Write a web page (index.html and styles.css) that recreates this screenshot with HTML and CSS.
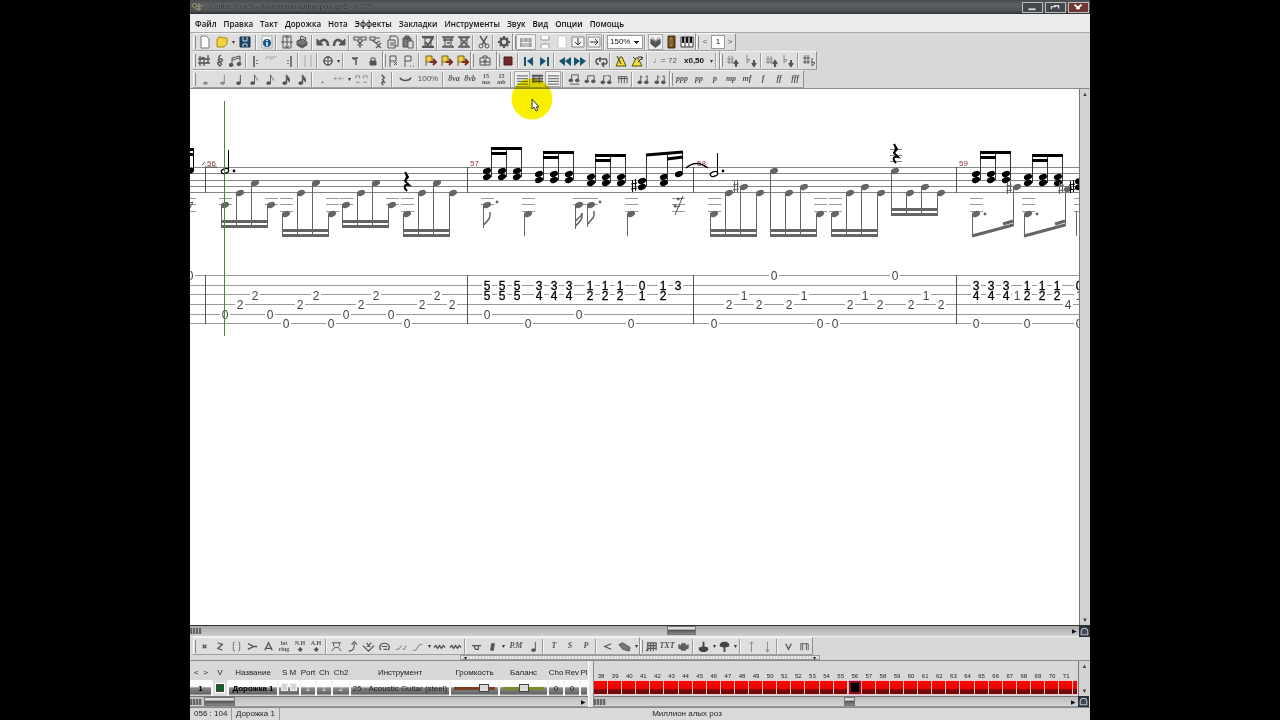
FILE: index.html
```html
<!DOCTYPE html>
<html lang="ru">
<head>
<meta charset="utf-8">
<title>Guitar Pro 5</title>
<link rel="stylesheet" href="styles.css">
</head>
<body>
<div class="window">
  <header class="titlebar">
    <svg class="app-icon" viewBox="0 0 12 12"><path d="M1 3h3v3H1zM5 5h6M3 8h6M7 2v8" stroke="#a59c70" fill="#222"/></svg>
    <span class="title">Guitar Pro 5 - [Миллион алых роз.gp5 - t=72]</span>
    <button class="win-btn" aria-label="Свернуть"><svg viewBox="0 0 20 10"><path d="M6 7h8" stroke="#ddd" stroke-width="2"/></svg></button>
    <button class="win-btn" aria-label="Развернуть"><svg viewBox="0 0 20 10"><path d="M6 7V4h5M9 3h5v3" stroke="#ddd" stroke-width="1.5" fill="none"/></svg></button>
    <button class="win-btn close" aria-label="Закрыть"><svg viewBox="0 0 20 10"><path d="M6 2l4 3 4-3M8 6h4" stroke="#fff" stroke-width="2" fill="none"/></svg></button>
  </header>
  <nav class="menu">
    <button>Файл</button><button>Правка</button><button>Такт</button><button>Дорожка</button><button>Нота</button><button>Эффекты</button><button>Закладки</button><button>Инструменты</button><button>Звук</button><button>Вид</button><button>Опции</button><button>Помощь</button>
  </nav>
  <div class="toolbar" id="tb-main"></div>
  <div class="toolbar" id="tb-play"></div>
  <div class="toolbar" id="tb-notes"></div>
  <main class="score">
    <div class="sheet"><svg id="sheet" width="889" height="536" viewBox="190 89 889 536"></svg></div>
    <div class="vscroll"><span class="arrow">▲</span><span class="arrow">▼</span></div>
  </main>
  <div class="hrow">
    <div class="hscroll dark"><span class="badge"></span><span class="thumb sheet-thumb"></span><span class="arrow">▶</span></div>
    <button class="corner" aria-label="Обзор"><svg viewBox="0 0 10 10"><path d="M2 8V5a3 3 0 016 0v3z" stroke="#b9c4ce" fill="#445"/></svg></button>
  </div>
  <div class="toolbar fx" id="tb-fx"></div>
  <div class="divider"><div class="divider-bar"><span>▾</span><span>▾</span></div></div>
  <section class="bottom">
    <div class="tracks">
      <table>
        <colgroup><col class="c22"><col class="c16"><col class="c50"><col class="c22"><col class="c16"><col class="c16"><col class="c18"><col class="c100"><col class="c49"><col class="c49"><col class="c16"><col class="c16"><col class="c8"></colgroup>
        <thead><tr><th>&lt;&nbsp; &gt;</th><th>V</th><th>Название</th><th>S M</th><th>Port</th><th>Ch</th><th>Ch2</th><th>Инструмент</th><th>Громкость</th><th>Баланс</th><th>Cho</th><th>Rev</th><th>Pl</th></tr></thead>
        <tbody><tr><td class="b">1</td><td><input type="checkbox" checked aria-label="V"></td><td class="b">Дорожка 1</td><td><span class="sm"></span><span class="sm"></span></td><td class="w">1</td><td class="w">1</td><td class="w">2</td><td>25 - Acoustic Guitar (steel)</td>
        <td><input class="vol" type="range" min="0" max="16" value="13" aria-label="Громкость"></td><td><input class="pan" type="range" min="-8" max="8" value="0" aria-label="Баланс"></td><td>0</td><td>0</td><td></td></tr></tbody>
      </table>
      <div class="hscroll"><span class="badge"></span><span class="thumb track-thumb"></span><span class="arrow">▶</span></div>
    </div>
    <div class="split"></div>
    <div class="bars">
      <div class="bar-list" id="bars"></div>
      <div class="hscroll"><span class="badge"></span><span class="thumb bar-thumb"></span><span class="arrow">▶</span></div>
    </div>
    <div class="side">
      <div class="vscroll"><span class="arrow">▲</span><span class="arrow">▼</span></div>
      <button class="corner" aria-label="Обзор тактов"><svg viewBox="0 0 10 10"><path d="M2 8V5a3 3 0 016 0v3z" stroke="#b9c4ce" fill="#445"/></svg></button>
    </div>
  </section>
  <footer class="status"><span class="pos">056 : 104</span><span class="name">Дорожка 1</span><span class="song">Миллион алых роз</span></footer>
  <svg class="pointer" viewBox="0 0 42 42"><circle cx="21" cy="21" r="20.500" fill="#f8f000"/></svg>
  <svg class="arrow-cursor" viewBox="0 0 9 14"><path d="M1 1v10l2-2 2 4 2-1-2-3h3z" fill="#fff" stroke="#333"/></svg>
</div>
<script src="app.js"></script>
</body>
</html>
```
FILE: styles.css
```css
* { box-sizing: border-box; }
body { margin: 0; padding: 0 190px; background: #000; font: 8px/10px "Liberation Sans", Arial, sans-serif; color: #222; }
button, input, select { font: inherit; color: inherit; margin: 0; padding: 0; }
button { border: 0; background: none; }
svg { display: block; }
.window { position: relative; min-height: 100vh; display: flex; flex-direction: column; background: #d8d8d8; overflow: hidden; }
.titlebar { height: 14px; display: flex; align-items: center; gap: 2px; padding: 0 1px 0 2px; background: linear-gradient(#484a4c 0, #5a5e61 30%, #505457 75%, #303234); }
.app-icon { width: 12px; height: 12px; }
.title { flex: 1; padding-left: 4px; font-size: 8px; color: #222426; text-shadow: 0 0 1px #aaa; white-space: nowrap; }
.win-btn { width: 21px; height: 11px; border: 1px solid #b9bcbe; background: #45494c; }
.win-btn svg { width: 18px; height: 9px; }
.close { background: #713630; }
.menu { height: 19px; display: flex; align-items: center; gap: 7px; padding: 2px 5px 0; background: #ececec; border-bottom: 1px solid #a8a8a8; font: 600 8px/12px "Open Sans", sans-serif; color: #111; }
.menu button { white-space: nowrap; }

.toolbar { height: 18px; display: flex; align-items: stretch; padding-left: 3px; background: #d8d8d8; }
.toolbar + .score { border-top: 1px solid #8b8b8b; }
#tb-play { height: 19px; }
.set { display: flex; align-items: center; background: #dedede; border-right: 1px solid #8f8f8f; border-bottom: 1px solid #a0a0a0; border-top: 1px solid #f4f4f4; }
.grip { width: 3px; height: 13px; border-left: 1px solid #fff; border-right: 1px solid #8a8a8a; }
.sep { width: 2px; height: 15px; margin: 0 2px 0 1px; border-left: 1px solid #999; border-right: 1px solid #f6f6f6; }
.tool { height: 16px; flex: none; display: flex; align-items: center; justify-content: center; color: #555; white-space: nowrap; }
.tool svg { width: 14px; height: 14px; fill: none; stroke: currentColor; }
#tb-notes .tool svg, #tb-fx .tool svg { width: 13px; height: 13px; }
.tool.wide { font-size: 8px; }
.tool.word { font: italic bold 8px/8px "Liberation Serif", serif; }
.tool.tiny { font: bold 6px/6px "Liberation Serif", serif; white-space: normal; }
.tool.on { background: #f0f0f0; border: 1px solid #aaa; }
.tool.strong { font-weight: bold; color: #111; }
.drop { width: 6px; flex: none; font-size: 6px; color: #333; text-align: center; }
.zoom { width: 36px; height: 14px; appearance: none; border: 1px solid #999; border-radius: 0; background: #fff; padding: 0 2px; background: linear-gradient(#222, #222) 26px 5px / 5px 1px no-repeat, linear-gradient(#222, #222) 27px 6px / 3px 1px no-repeat, linear-gradient(#222, #222) 28px 7px / 1px 1px no-repeat, #fff; }
.page { width: 14px; height: 14px; border: 1px solid #999; background: #fff; text-align: center; line-height: 12px; }

.score { flex: 1; min-height: 0; display: flex; background: #fff; }
.sheet { flex: 1; min-width: 0; overflow: hidden; height: 536px; }
.vscroll { width: 11px; display: flex; flex-direction: column; justify-content: space-between; align-items: center; background: #d2d2d2; border-left: 1px solid #777; }
.arrow { font-size: 6px; line-height: 10px; color: #444; }
.hrow { display: flex; height: 12px; border-top: 1px solid #333; border-bottom: 1px solid #eee; }
.hscroll { position: relative; flex: 1; height: 11px; display: flex; align-items: center; background: linear-gradient(#bcbcbc, #d4d4d4); border-top: 1px solid #777; border-bottom: 1px solid #999; }
.hscroll.dark { background: linear-gradient(#a8a8a8, #cfcfcf); height: 10px; border: 0; }
.hscroll .arrow { margin-left: auto; padding-right: 2px; color: #111; }
.badge { width: 12px; height: 6px; background: repeating-linear-gradient(90deg, #666 0 2px, #aaa 2px 3px); }
.thumb { position: absolute; top: 0; height: 9px; background: linear-gradient(#ddd 0 30%, #555 45%, #888); border: 1px solid #777; }
.sheet-thumb { left: 53.6%; width: 29px; }
.track-thumb { left: 14px; width: 31px; }
.bar-thumb { left: 51.6%; width: 11px; }
.corner { width: 11px; height: 11px; background: #27323c; }

.divider { height: 6px; padding: 0 30% 0 30%; background: #d8d8d8; border-bottom: 1px solid #888; }
.divider-bar { height: 5px; display: flex; justify-content: space-between; border: 1px solid #999; background: repeating-linear-gradient(90deg, #e6e6e6 0 2px, #ccc 2px 3px); font-size: 6px; line-height: 4px; padding: 0 3px; }
.bottom { display: flex; height: 46px; }
.tracks { flex: 0 0 398px; overflow: hidden; }
table { table-layout: fixed; width: 398px; border-collapse: collapse; }
.c8 { width: 8px; } .c16 { width: 16px; } .c18 { width: 18px; } .c22 { width: 22px; } .c49 { width: 49px; } .c50 { width: 50px; } .c100 { width: 100px; }
th { height: 19px; padding: 5px 0 0; font-weight: normal; white-space: nowrap; overflow: visible; }
th:last-child { overflow: hidden; }
td { height: 16px; padding: 0; text-align: center; white-space: nowrap; overflow: hidden; border-right: 2px solid #f4f4f4; background: linear-gradient(#fff 0 40%, #888 50%, #666 85%, #eee); line-height: 9px; }
td.b { font-weight: bold; color: #000; }
td.w { color: #eee; }
td:nth-child(2) { background: #ddd; }
input[type=checkbox] { appearance: none; display: block; width: 8px; height: 8px; margin: 0 auto; border: 1px solid #444; background: #125c20; outline: 1px solid #fff; }
.sm { display: inline-block; width: 7px; height: 8px; margin: 0 1px; background: #d5d5d5; border: 1px solid #eee; }
input[type=range] { appearance: none; display: block; width: 41px; height: 9px; margin: 0 auto; }
.vol { background: linear-gradient(#7d3d22, #7d3d22) no-repeat center / 100% 3px; }
.pan { background: linear-gradient(#7c8a28, #7c8a28) no-repeat center / 100% 3px; }
input[type=range]::-webkit-slider-thumb { appearance: none; width: 10px; height: 8px; background: #ddd; border: 1px solid #444; }
.split { width: 6px; background: #e4e4e4; border-left: 1px solid #fff; border-right: 1px solid #888; }
.bars { flex: 1; min-width: 0; overflow: hidden; }
.bar-list { height: 35px; display: flex; padding-top: 11px; overflow: hidden; }
.bar { min-width: 0; overflow: hidden; text-align: center; font-size: 6px; line-height: 8px; }
.cell { height: 15px; border: solid #f3c9c9; border-width: 1px 1px 1px 0; background: linear-gradient(#f40303 0 58%, #740a0a 68%); }
.cell.current { background: #000; border: 3px solid #8b1111; outline: 1px solid #eac; outline-offset: -1px; }
.side { width: 12px; display: flex; flex-direction: column; }
.side .vscroll { flex: 1; width: 12px; }
.status { height: 13px; display: flex; align-items: center; border-top: 1px solid #888; background: #d9d9d9; }
.status span { line-height: 12px; padding: 0 4px; white-space: nowrap; }
.pos { width: 42px; border-right: 1px solid #999; }
.name { width: 48px; border-right: 1px solid #999; }
.status .song { flex: 1; text-align: center; padding-right: 0; }
.pointer { position: absolute; left: 321px; top: 78px; width: 42px; height: 42px; mix-blend-mode: multiply; }
.arrow-cursor { position: absolute; left: 341px; top: 98px; width: 9px; height: 14px; }
.digit { font: 12px/10px "Liberation Sans Narrow", "Liberation Sans", sans-serif; text-anchor: middle; }
.barno { font: 8px/8px "Liberation Sans", sans-serif; fill: #96303a; }
```
FILE: app.js
```js
/* ---------- toolbar icons, drawn on a 14 x 14 grid ---------- */
const head = (x, y) => `<ellipse cx="${x}" cy="${y}" rx="2" ry="1.500" fill="currentColor"/>`;
const arrowR = '<path d="M7 8h6M10 5l3 3-3 3" stroke="#7c2d1d" stroke-width="2"/>';
const flagY = '<path d="M3 12V2h6v6H3" fill="#f0cf45" stroke="#76651b"/>';
const chart = '<path d="M2 3h10M2 11h10M4 3v8M10 3v8"/>';
const icons = {
  new: '<path d="M3 1h5l3 3v9H3z" fill="#fff" stroke="#777"/>',
  open: '<path d="M2 4l2-2h3l1 1h4v6l-3 3H2z" fill="#f2d33e" stroke="#a48a18"/>',
  save: '<path d="M2 2h10v10H2z" fill="#1d4468" stroke="#16334c"/><path d="M5 2v4h4V2M5 12V9h4v3" stroke="#c7d6e2"/>',
  info: '<path d="M2 1h10v12H2z" fill="#f4f4f4" stroke="#aaa"/><circle cx="7" cy="8" r="4" fill="#145b8c" stroke="none"/><path d="M7 5v1M7 7v4" stroke="#fff" stroke-width="1.500"/>',
  page: '<path d="M3 1h8v12H3zM7 1v12M1 7h12M5 3l2-2 2 2M5 11l2 2 2-2"/>',
  print: '<path d="M2 6l6-2 4 3v3l-5 3-5-3z" fill="#777"/><path d="M5 5l1-4 5 2-1 3M3 9l4 2 4-2" stroke="#444"/>',
  undo: '<path d="M12 11c0-6-4-8-8-4" stroke-width="2.500"/><path d="M1 4v6h6z" fill="currentColor"/>',
  redo: '<path d="M2 11c0-6 4-8 8-4" stroke-width="2.500"/><path d="M13 4v6H7z" fill="currentColor"/>',
  plusnote: '<path d="M1 2h5v3H1zM8 2h5v3H8zM4 5l3 4 3-4M7 7v6M4 10h6" stroke-width="1.200"/>',
  minusnote: '<path d="M1 2h5v3H1zM7 3h4M3 5l4 3 4-2M7 8l5 5M12 8l-5 5" stroke-width="1.200"/>',
  copy: '<path d="M3 5h7v8H3zM5 5V1h6l2 2v8h-3" /><path d="M5 8h4M5 10h4"/>',
  paste: '<path d="M2 3h8v9H2zM4 1h4v3H4z" fill="#777"/><path d="M7 6h5v7H7z" fill="#ddd"/>',
  check: chart + '<path d="M1 2h12M1 12h12M4 7l3 3 5-7" stroke-width="2"/>',
  table: chart + '<path d="M1 2h12M1 12h12M2 5h10M6 8h3" stroke-width="1.500"/>',
  tablex: chart + '<path d="M1 2h12M1 12h12M4 4l6 6M10 4l-6 6" stroke-width="1.500"/>',
  cut: '<path d="M3 1l6 9M10 1L5 10" stroke-width="1.500"/><circle cx="4" cy="11" r="2"/><circle cx="10" cy="11" r="2"/>',
  gear: '<circle cx="7" cy="7" r="3.500" stroke-width="2.500"/><path d="M7 1v3M7 10v3M1 7h3M10 7h3M3 3l2 2M9 9l2 2M11 3L9 5M5 9l-2 2" stroke-width="2"/>',
  screen: '<path d="M1 4h12M1 6h12M1 9h12M1 11h12M2 3v9M7 3v4M11 3v9" stroke="#888"/>',
  hpage: '<path d="M3 1v4h8V1M3 13V9h8v4" fill="#fff" stroke="#999"/>',
  blank: '<path d="M3 1h8v12H3z" fill="#fff" stroke="#ccc"/>',
  down: '<path d="M1 2h12v10H1z" fill="#f2f2f2" stroke="#888"/><path d="M7 3v7M4 7l3 3 3-3" stroke="#333"/>',
  right: '<path d="M1 2h12v10H1z" fill="#f2f2f2" stroke="#888"/><path d="M3 7h8M8 4l3 3-3 3" stroke="#333"/>',
  basket: '<path d="M2 4l5 3 5-3v5l-5 4-5-4z" fill="#555"/><path d="M3 2l4 4 4-4"/>',
  door: '<path d="M4 1h7v12H4z" fill="#65471f" stroke="#4a3211"/><path d="M6 3h2v8H6z" stroke="#b08a4a"/>',
  piano: '<path d="M1 2h12v10H1zM5 2v10M9 2v10" fill="#fff" stroke="#333"/><path d="M3 2v6M7 2v6M11 2v6" stroke="#111" stroke-width="2"/>',
  clef: '<path d="M1 5h12M1 9h12M3 2v10M7 3v9M11 1v8M3 6l3-3" stroke-width="1.300"/>',
  clefS: '<path d="M8 1c-3 2-3 3 0 4s1 3-2 3 0 4 2 4M5 5l4 6" stroke-width="1.500"/>',
  pair: '<path d="M3 11V4l8-2v7M3 6l8-2"/>' + head(2, 11) + head(10, 10),
  repL: '<path d="M4 2v11M7 6v1M7 9v1" stroke-width="1.500"/>',
  alt: '<path d="M1 5V3h11M4 5h4" stroke="#aaa"/>',
  repR: '<path d="M10 2v11M7 6v1M7 9v1" stroke-width="1.500"/>',
  bar: '<path d="M4 1v12M10 1v12" stroke="#aaa"/>',
  diamond: '<circle cx="7" cy="7" r="4" stroke-width="1.500"/><path d="M7 2v10M2 7h10"/>',
  para: '<path d="M4 4h6M8 4v7M5 5h2" stroke-width="1.500"/>',
  lock: '<path d="M4 7h6v4H4z" fill="#555"/><path d="M5 7V4h4v3"/>',
  flag: '<path d="M3 13V2h6v5H3M7 8l3 3M10 8l-3 3"/>',
  flags: '<path d="M3 13V2h6v5H3M8 12h1M11 12h1"/>',
  flagY: flagY + arrowR,
  box: '<path d="M2 4h10v7H2zM5 4V2h4v2M5 7h4M7 5v7M2 8h10"/>',
  stop: '<path d="M3 3h8v8H3z" fill="#702a2a" stroke="#501818"/>',
  first: '<path d="M3 3v9" stroke="#14536e" stroke-width="2"/><path d="M11 3v9L5 7z" fill="#14536e" stroke="none"/>',
  last: '<path d="M11 3v9" stroke="#14536e" stroke-width="2"/><path d="M3 3v9l6-5z" fill="#14536e" stroke="none"/>',
  rew: '<path d="M7 3v9L1 7zM13 3v9L7 7z" fill="#14536e" stroke="none"/>',
  fwd: '<path d="M7 3v9l6-5zM1 3v9l6-5z" fill="#14536e" stroke="none"/>',
  loop: '<path d="M5 10H3q-2-3 0-5h9q2 3 0 5H8M10 8l-2 2 2 3M6 3v5" stroke-width="1.500"/>',
  metro: '<path d="M2 12h10L8 3H6z" fill="#efdc3b" stroke="#554d12"/><path d="M7 10L3 2" stroke="#333"/>',
  metro2: '<path d="M2 12h10L8 4H6z" fill="#efdc3b" stroke="#554d12"/><path d="M3 3l3 3M8 3h4v3M8 8l5-5" stroke="#333"/>',
  sharpU: '<path d="M3 2v8M6 2v8M1 5h7M1 8h7" stroke="#888"/><path d="M10 13V8M8 10l2-3 2 3" stroke-width="2"/>',
  flatD: '<path d="M3 1v8l3-3-3-1" stroke="#888"/><path d="M10 6v6M8 9l2 3 2-3" stroke-width="2"/>',
  sharp: '<path d="M3 1v9M6 1v9M1 4h7M1 8h7M10 4v8l3-3-3-1"/>',
  whole: '<ellipse cx="7" cy="11" rx="2" ry="1"/>',
  half: '<path d="M9 2v9" stroke="#888"/><ellipse cx="7" cy="11" rx="2" ry="1"/>',
  quarter: '<path d="M9 2v9"/>' + head(7, 11),
  eighth: '<path d="M7 11V2c0 3 4 3 3 6"/>' + head(5, 11),
  sixteenth: '<path d="M7 11V2c0 3 4 3 3 6M7 5c0 2 4 2 3 5" stroke-width="1.500"/>' + head(5, 11),
  dot: '<circle cx="7" cy="10" r=".5" fill="currentColor"/>',
  triplet: '<path d="M1 6h3M6 6h3M11 6h2M4 4v4M9 4v4" stroke="#999"/>',
  triplet2: '<path d="M1 6V3h4v3M9 6V3h4v3M1 10h4M9 10h4" stroke="#888"/>',
  rest: '<path d="M6 2l3 3-2 2 2 3c-4-1-3 2-1 3" stroke-width="1.500"/>',
  tie: '<path d="M1 5c2 4 10 4 12 0" stroke-width="1.500"/>',
  lines: '<path d="M1 3h12M1 6h12M1 9h12M1 12h12" stroke="#777" stroke-width="1.300"/>',
  linesB: '<path d="M1 3h12M1 6h12M1 9h12" stroke-width="2"/><path d="M3 2v9M9 2v9"/>',
  beam: '<path d="M4 9V3h7v6"/>' + head(3, 9) + head(10, 9),
  beamI: '<path d="M4 10V3h3M8 3h3v7"/>' + head(3, 10) + head(10, 10),
  beamT: '<path d="M4 8V2h7v6M2 12h10"/>' + head(3, 8) + head(10, 8),
  four: '<path d="M2 4h10M3 4v7M6 4v7M9 4v7M12 4v7M2 6h10"/>',
  split: '<path d="M4 10V3l2 2M11 10V3l-2 1"/>' + head(3, 10) + head(10, 10),
  x: '<path d="M5 5l4 4M9 5l-4 4" stroke-width="1.500"/>',
  ghost: '<path d="M4 3l5 2-5 4 5 2M6 8l3-4" stroke-width="1.300"/>',
  braces: '<path d="M5 2c-3 1 0 4-2 5 2 1-1 4 2 5M9 2c3 1 0 4 2 5-2 1 1 4-2 5"/>',
  accent: '<path d="M2 4l6 3-6 3M8 7h4" stroke-width="1.500"/>',
  letA: '<path d="M3 11l4-8 4 8M4 9h6" stroke-width="1.500"/>',
  bend: '<path d="M3 12c5 0 6-3 6-8M6 5l3-3 3 3" stroke-width="1.300"/>',
  wham: '<path d="M2 3h10M4 3v4M10 3v4M2 12l3-4h4l3 4"/>',
  vee: '<path d="M1 6l6 6 6-6M5 3l2 3 3-3M5 7h4" stroke-width="1.300"/>',
  arch: '<path d="M3 11c-6-10 14-10 8 0M4 7h6M6 10h4" stroke-width="1.300"/>',
  slide: '<path d="M1 10h3l3-4M8 10h2l2-4" stroke="#777"/>',
  step: '<path d="M1 11h3l4-6h3" stroke="#777"/>',
  wave: '<path d="M1 8l2-2 2 3 2-3 2 3 2-3 2 2" stroke-width="1.500"/>',
  pick: '<path d="M4 6h5v4H6zM2 6h10" stroke-width="1.300"/>',
  block: '<path d="M6 4h3l-1 7H5z" fill="#555"/>',
  less: '<path d="M11 4L4 7l7 3" stroke-width="1.300"/>',
  stain: '<path d="M1 5l4-2 8 5-1 4-7-2z" fill="#777"/>',
  grid: '<path d="M2 3h10v8M2 6h10M2 9h10M3 3v9M6 3v9M9 3v9M12 3v7M1 12l3-3" stroke-width="1.300"/>',
  amp: '<path d="M2 5l3 2v3L2 9zM12 5L9 7v3l3-1zM5 4h4v7H5z" fill="#666"/>',
  hand: '<path d="M2 11V8l4-1V2h2v5l4 1v3l-3 2H5z" fill="#444" stroke="none"/>',
  handD: '<path d="M2 4v3l4 1v5h2V8l4-1V4L9 2H5z" fill="#444" stroke="none"/>',
  up: '<path d="M7 13V2M5 4l2-2 2 2" stroke="#888"/>',
  dn: '<path d="M7 2v11M5 10l2 3 2-3" stroke="#888"/>',
  pickV: '<path d="M4 4l3 6 3-6" stroke-width="1.500"/>',
  pickD: '<path d="M3 11V4h8v7M5 4v7M9 4v7"/>'
};

/* "icon:width" is a button, "'text:width" a text button, "|" a separator,
   "v" a drop-down arrow, "||" starts a new group, "+" marks a pressed button */
const bars = {
  'tb-main': 'new:18 open:16 v save:18 | info:15 | page:15 print:16 | undo:16 redo:16 | plusnote:16 minusnote:16 copy:16 paste:15 | check:15 | table:16 tablex:15 | cut:15 | gear:16 || +screen:20 hpage:18 blank:16 down:16 +right:16 | ZOOM | +basket:15 door:16 piano:16 || PREV PAGE NEXT',
  'tb-play': 'clef:16 clefS:16 pair:16 | repL:15 alt:16 repR:16 | bar:14 | diamond:15 v | para:18 lock:18 || flag:15 flags:16 | flagY:16 flagY:16 flagY:16 || box:22 || stop:16 | first:15 last:16 | rew:15 fwd:16 | loop:15 | metro:16 metro2:16 | \'♩=_72:30 #x0,50:28 v | || sharpU:20 flatD:16 | sharpU:16 flatD:16 | sharp:15',
  'tb-notes': 'whole:18 half:16 quarter:16 eighth:16 eighth:16 sixteenth:16 sixteenth:16 | dot:15 triplet:16 v triplet2:18 | rest:15 | tie:20 \'100%:26 | ~8va:16 ~8vb:16 ^15_ma:16 ^15_mb:15 | +lines:16 linesB:15 +lines:16 | beamT:16 beam:16 beamI:16 four:16 | split:16 split:18 || ~ppp:18 ~pp:16 ~p:16 ~mp:16 ~mf:16 ~f:16 ~ff:16 ~fff:16',
  'tb-fx': 'x:16 ghost:16 braces:16 accent:16 letA:16 ^let_ring:16 ^N.H_◆:16 ^A.H_◆:16 | wham:15 bend:16 vee:16 arch:16 slide:18 step:16 v wave:15 wave:16 | pick:16 block:16 v ~P.M:20 quarter:15 | ~T:16 ~S:16 ~P:16 | less:16 stain:18 v || grid:16 ~TXT:16 amp:16 | hand:15 v handD:15 v | up:16 dn:16 | pickV:16 pickD:16'
};
function tool(t) {
  if (t === '|') return '<span class="sep"></span>';
  if (t === '||') return '</div><div class="set"><span class="grip"></span>';
  if (t === 'v') return '<span class="drop">▾</span>';
  if (t === 'ZOOM') return '<select class="zoom" aria-label="Масштаб"><option>150%</option></select>';
  if (t === 'PREV') return '<button class="tool" style="width:12px">&lt;</button>';
  if (t === 'PAGE') return '<span class="page">1</span>';
  if (t === 'NEXT') return '<button class="tool" style="width:10px">&gt;</button>';
  const on = t[0] === '+';
  if (on) t = t.slice(1);
  const [name, w] = t.split(':');
  const kind = { "'": 'wide', '#': 'wide strong', '~': 'word', '^': 'tiny' }[name[0]];
  const body = kind ? name.slice(1).replace(/_/g, kind === 'tiny' ? '<br>' : ' ') : `<svg viewBox="0 0 14 14">${icons[name]}</svg>`;
  return `<button class="tool ${kind || ''}${on ? ' on' : ''}" style="width:${w}px">${body}</button>`;
}
for (const id in bars)
  document.getElementById(id).innerHTML = '<div class="set"><span class="grip"></span>' + bars[id].split(' ').map(tool).join('') + '</div>';

/* ---------- score ---------- */
const G = '#656565', K = '#000';
let out = '';
const rect = (x, y, w, h, c) => { out += `<rect x="${x}" y="${y}" width="${w}" height="${h}" fill="${c}"/>`; };
const path = (d, c, w = 1, f = 'none') => { out += `<path d="${d}" stroke="${c}" stroke-width="${w}" fill="${f}"/>`; };
const note = (x, y, c) => { out += `<ellipse cx="${x}" cy="${y}" rx="4.200" ry="2.800" fill="${c}" transform="rotate(-20 ${x} ${y})"/>`; };
const ledger = (x, ys) => ys.forEach(y => rect(x - 6, y, 13, 1, '#999'));
const sharp = (x, y, c) => path(`M${x - 1.5} ${y - 6}v12M${x + 1.5} ${y - 7}v12M${x - 3} ${y - 2}l6-1M${x - 3} ${y + 3}l6-1`, c);
const dot = (x, y, c = K) => { out += `<circle cx="${x}" cy="${y}" r="1.400" fill="${c}"/>`; };
const low = [198, 204, 211];

[167, 173, 180, 186, 192].forEach(y => rect(190, y, 889, 1, '#858585'));
[275, 285, 294, 304, 314, 323].forEach(y => rect(190, y, 889, 1, '#999'));
[205, 467, 693, 956].forEach(x => { rect(x, 167, 1, 26, '#555'); rect(x, 275, 1, 49, '#555'); });
[[56, 207], [57, 470], [58, 697], [59, 959]].forEach(([n, x]) => { out += `<text class="barno" x="${x}" y="166">${n}</text>`; });

/* sixteenth groups with stems down: x of first note, four heights, beam top */
[[225, [205, 193, 183, 205], 220], [286, [214, 193, 183, 214], 229], [346, [205, 193, 183, 205], 220], [407, [214, 193, 183, 193], 229],
 [714, [214, 193, 187, 193], 229], [774, [171, 193, 187, 214], 229], [835, [214, 193, 187, 193], 229], [895, [171, 193, 187, 193], 208]
].forEach(([x, ys, b]) => {
  ys.forEach((y, i) => {
    const nx = x + Math.round(i * 15.2);
    if (y > 200) ledger(nx, y > 210 ? low : low.slice(0, 2));
    rect(nx - 4, y, 1, b + 8 - y, G);
    note(nx, y, G);
  });
  rect(x - 4, b, 46, 3, G);
  rect(x - 4, b + 5, 46, 3, G);
});

/* chord groups with stems up: x, upper head, lower head, beam top */
[[487, 171, 177, 147], [539, 174, 180, 151], [591, 177, 183, 154], [976, 174, 180, 151], [1028, 177, 183, 154]].forEach(([x, a, c, b]) => {
  [0, 15, 30].forEach(d => { note(x + d, a, K); note(x + d, c, K); rect(x + d + 4, b, 1, c - b, '#333'); });
  rect(x + 4, b, 31, 3, K);
  rect(x + 4, b + 5, 16, 3, K);
});
note(642, 181, K); note(642, 187, K); note(664, 177, K); note(664, 183, K); note(679, 174, K);
sharp(634, 186, K);
path('M646.5 154v32M667.5 154v28M682.5 151v22', '#333');
path('M646 155l37-3', K, 3); path('M667 159l16-2', K, 3);
path('M686 168q10-9 22 0', K, 1.5);

/* half notes */
[[225, 171, 150, 234], [714, 174, 153, 723]].forEach(([x, y, t, d]) => {
  out += `<ellipse cx="${x}" cy="${y}" rx="3.800" ry="2.300" fill="#fff" stroke="#000" stroke-width="1.300" transform="rotate(-20 ${x} ${y})"/>`;
  rect(x + 3, t, 1, y - t, K); dot(d, 171);
});
sharp(736, 187, G);

/* quarter rests */
const rest = (x, y) => path(`M${x - 1} ${y}l3 5-3 4 4 4c-6-1-5 3-2 6M${x} ${y + 2}l1 3-2 4`, K, 2);
[149, 155, 161].forEach(y => rect(890, y, 12, 1, '#888'));
rest(406, 172); rest(895, 144);

/* lower voice of bar 57 */
[[487, 2], [528, 3], [579, 2], [591, 2], [631, 3], [678, 3]].forEach(([x, n]) => ledger(x, low.slice(0, n)));
[[487, 228], [579, 229], [591, 227]].forEach(([x, e]) => {
  note(x, 205, G); rect(x - 4, 205, 1, e - 205, G);
  path(`M${x - 3} ${e - 3}c2-4 6-5 6-9v-4`, G, 1.5);
});
path('M576 221c2-4 6-4 6-8', G, 1.5);
dot(497, 202, G); dot(600, 202, G);
[528, 631].forEach(x => { note(x, 214, G); rect(x - 4, 214, 1, 22, G); });
path('M683 196l-8 19M683 198l-5 1M680 206l-5 1', '#555');
dot(678, 199, G); dot(675, 206, G);

/* lower voice of bar 59 */
[976, 1028].forEach(x => {
  ledger(x, low); note(x, 214, G); dot(x + 9, 214, G);
  rect(x - 4, 214, 1, 23, G); rect(x + 37, 188, 1, 38, G);
  path(`M${x - 4} 236l41-11`, G, 3); path(`M${x + 27} 224l10-3`, G, 3);
  sharp(x + 33, 188, G);
});
note(1017, 187, G); note(1068, 189, G);
sharp(1072, 187, K); note(1079, 181, K); note(1079, 187, K);
ledger(1080, low); rect(1076, 211, 1, 25, G);

/* end of bar 55 */
note(190, 171, K); rect(193, 148, 1, 23, K); rect(190, 148, 4, 3, K); rect(190, 153, 4, 3, K);
ledger(189, low); path('M190 203l3-1-3 6M202 165l3-3M205 167h12', '#555');

/* tablature: string index, fret, bold flag, positions */
const strings = [276, 286, 296, 305, 315, 324];
[[0, 0, 0, [190, 774, 895]],
 [1, 5, 1, [487, 502, 517]], [2, 5, 1, [487, 502, 517]], [1, 3, 1, [539, 554, 569, 678, 976, 991, 1006]], [2, 4, 1, [539, 554, 569, 976, 991, 1006]],
 [1, 1, 1, [590, 605, 620, 663, 1027, 1042, 1057]], [2, 2, 1, [590, 605, 620, 663, 1027, 1042, 1057]], [1, 0, 1, [642, 1079]], [2, 1, 1, [642]],
 [2, 2, 0, [255, 316, 376, 437]], [3, 2, 0, [240, 300, 361, 422, 452, 729, 759, 789, 850, 880, 911, 941]],
 [2, 1, 0, [744, 804, 865, 926, 1017, 1079]], [3, 4, 0, [1068]],
 [4, 0, 0, [225, 270, 346, 391, 487, 579]], [5, 0, 0, [286, 331, 407, 528, 631, 714, 820, 835, 976, 1027, 1079]]
].forEach(([s, f, b, xs]) => xs.forEach(x => {
  const y = strings[s];
  rect(x - 5, y - 4, 10, 8, '#fff');
  out += `<text class="digit" x="${x}" y="${y + 4}" fill="${b ? '#000' : '#444'}"${b ? ' stroke="#000" stroke-width=".3"' : ''}>${f}</text>`;
}));
rect(224, 101, 1, 235, '#3f8a47');
document.getElementById('sheet').innerHTML = out;

/* ---------- bar navigator ---------- */
let cells = '';
for (let n = 38; n <= 72; n++)
  cells += `<div class="bar" style="flex:${n < 72 ? 14 : 5} 0 0">${n < 72 ? n : '&nbsp;'}<div class="cell${n === 56 ? ' current' : ''}"></div></div>`;
document.getElementById('bars').innerHTML = cells;
```
